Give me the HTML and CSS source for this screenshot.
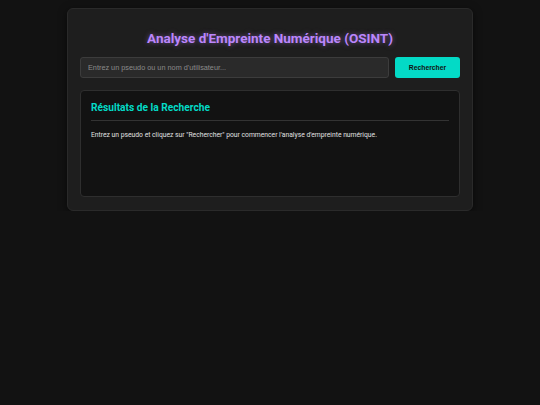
FILE: index.html
```html
<!DOCTYPE html>
<html lang="fr">
<head>
<meta charset="utf-8">
<title>Analyse d'Empreinte Numérique (OSINT)</title>
<link rel="stylesheet" href="styles.css">
</head>
<body>
<main class="container">
  <h1 class="title">Analyse d'Empreinte Numérique (OSINT)</h1>
  <form class="search" onsubmit="return false">
    <input class="search-input" type="text" placeholder="Entrez un pseudo ou un nom d'utilisateur...">
    <button class="search-btn" type="submit">Rechercher</button>
  </form>
  <section class="results">
    <h2 class="results-title">Résultats de la Recherche</h2>
    <p class="results-text">Entrez un pseudo et cliquez sur "Rechercher" pour commencer l'analyse d'empreinte numérique.</p>
  </section>
</main>
</body>
</html>
```

FILE: styles.css
```css
* { box-sizing: border-box; }
html, body { margin: 0; padding: 0; }
body {
  background: #121212;
  color: #e0e0e0;
  font-family: Roboto, "Liberation Sans", sans-serif;
  padding-top: 8px;
}
.container {
  width: 406px;
  margin: 0 auto;
  background: #1e1e1e;
  border: 1px solid #2a2a2a;
  border-radius: 6px;
  padding: 12px 12px 13px;
  box-shadow: 0 2px 8px rgba(0,0,0,0.5);
}
.title {
  margin: 9px 0 11px;
  text-align: center;
  font-size: 13.5px;
  line-height: 16px;
  font-weight: 700;
  color: #bb86fc;
  text-shadow: 0 0 5px rgba(187,134,252,0.5);
}
.search {
  display: flex;
  gap: 6px;
  margin: 0 0 12px;
}
.search-input {
  flex: 1;
  height: 21px;
  background: #2a2a2a;
  border: 1px solid #3c3c3c;
  border-radius: 3px;
  padding: 0 7px;
  color: #e0e0e0;
  font-family: "Liberation Sans", Arial, sans-serif;
  font-size: 7.3px;
  outline: none;
}
.search-input::placeholder { color: #8a8a8a; }
.search-btn {
  width: 65px;
  height: 21px;
  background: #03dac6;
  border: none;
  border-radius: 3px;
  color: #121212;
  font-family: "Liberation Sans", Arial, sans-serif;
  font-size: 6.8px;
  font-weight: 700;
  padding: 0;
}
.results {
  background: #121212;
  border: 1px solid #2e2e2e;
  border-radius: 4px;
  padding: 10px 10px;
  min-height: 107px;
}
.results-title {
  margin: 0 0 6px;
  padding-bottom: 6px;
  border-bottom: 1px solid #333333;
  font-size: 10.2px;
  line-height: 13px;
  font-weight: 700;
  color: #03dac6;
}
.results-text {
  margin: 9px 0 0;
  font-size: 6.75px;
  line-height: 10px;
  color: #e0e0e0;
}
```
